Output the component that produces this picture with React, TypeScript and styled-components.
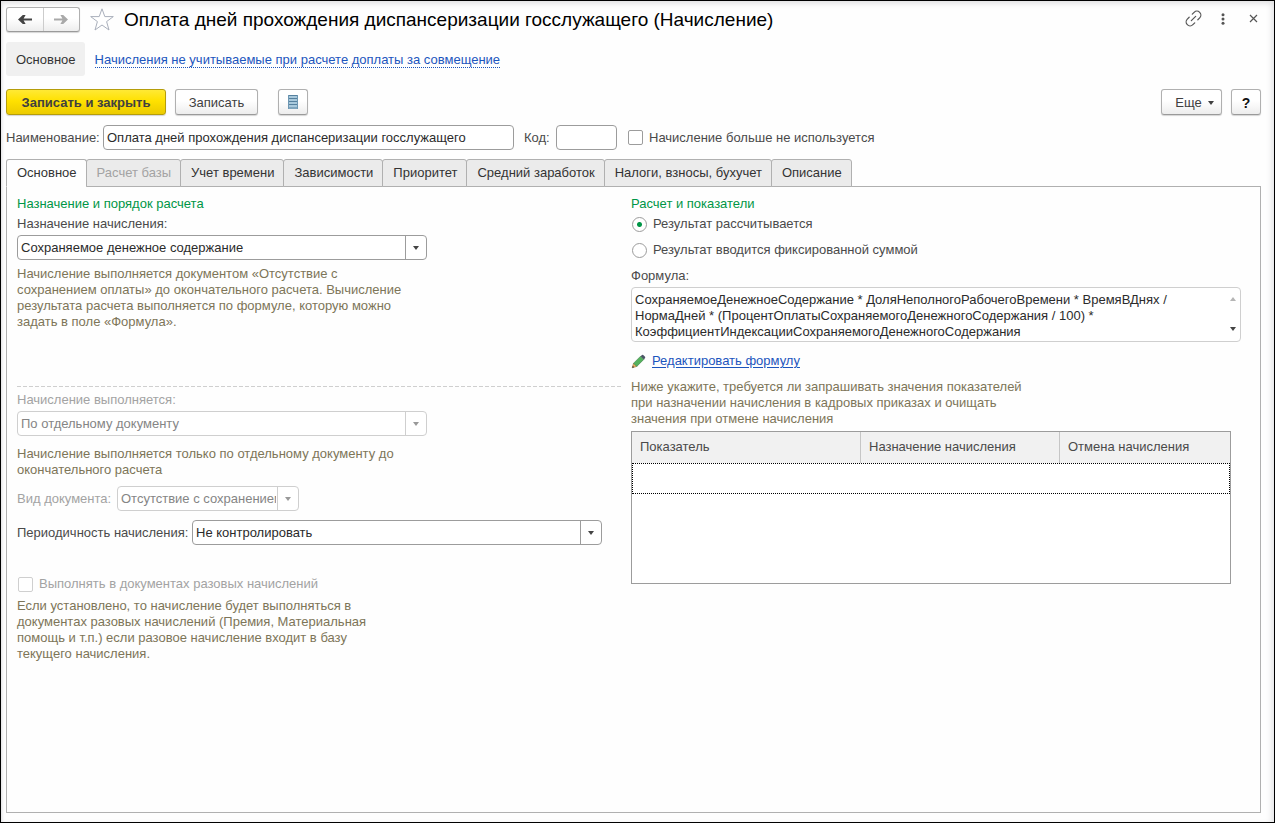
import React from "react";
import styled, { createGlobalStyle, css } from "styled-components";

const GlobalStyle = createGlobalStyle`
  *, *::before, *::after { box-sizing: border-box; }
  body { margin: 0; background: #fff; }
  body, button, input, select, textarea {
    font-family: "Liberation Sans", Arial, sans-serif;
    font-size: 13px;
    line-height: 16px;
  }
`;

const color = {
  text: "#2b2b2b",
  label: "#4a4a4a",
  hint: "#7d7558",
  disabled: "#a3a3a3",
  border: "#9c9c9c",
  lightBorder: "#cfcfcf",
  green: "#009646",
  link: "#1c55bd",
};

const Window = styled.div`
  display: flex;
  flex-direction: column;
  min-height: 100vh;
  padding: 6px 13px 9px 5px;
  border: 1px solid #000;
  background: #fefefe;
  box-shadow: inset 0 5px 6px -3px #dededf, inset -5px 0 6px -3px #e2e2e4, inset 3px 0 3px -2px #e2e2e4;
  color: ${color.label};
`;

const Header = styled.header`
  display: flex;
  align-items: center;
  height: 25px;
`;

const raised = css`
  border: 1px solid #b0b0b0;
  border-bottom-color: #9a9a9a;
  border-radius: 3px;
  background: linear-gradient(#fff 45%, #ededed);
  box-shadow: 0 1px 1px #d5d5d5;
`;

const History = styled.div`
  display: flex;
  width: 74px;
  height: 25px;
  ${raised}
`;

const HistoryButton = styled.button`
  display: flex;
  flex: 1;
  align-items: center;
  justify-content: center;
  padding: 0;
  border: 0;
  background: none;
  color: #444;
  & + & { border-left: 1px solid #ccc; }
  &:disabled { color: #a9a9a9; }
`;

const IconButton = styled.button`
  display: flex;
  align-items: center;
  justify-content: center;
  width: 30px;
  height: 24px;
  padding: 0;
  border: 0;
  background: none;
  color: #555;
`;

const StarButton = styled(IconButton)`
  margin: 0 7px;
`;

const Title = styled.h1`
  flex: 1;
  margin: 0;
  font-size: 19px;
  font-weight: 400;
  line-height: 24px;
  color: #000;
`;

const HeaderTools = styled.div`
  display: flex;
  margin-right: -7px;
  padding-bottom: 2px;
`;

const Nav = styled.nav`
  display: flex;
  align-items: center;
  gap: 10px;
  margin-top: 10px;
`;

const NavCurrent = styled.a`
  padding: 10px 9px 8px 10px;
  border-radius: 3px;
  background: #f0f0f0;
  color: #333;
  text-decoration: none;
`;

const NavLink = styled.a`
  padding-top: 2px;
  border-bottom: 1px dotted ${color.link};
  line-height: 14px;
  color: ${color.link};
  text-decoration: none;
`;

const CommandBar = styled.div`
  display: flex;
  gap: 9px;
  margin-top: 13px;
`;

const Button = styled.button<{ $width: number }>`
  display: flex;
  align-items: center;
  justify-content: center;
  width: ${(p) => p.$width}px;
  height: 26px;
  padding: 1px 0 0;
  ${raised}
  color: #404040;
  white-space: nowrap;
`;

const PrimaryButton = styled(Button)`
  border-color: #b59d0a;
  background: linear-gradient(#ffe935, #ffe100 45%, #eccb00);
  font-weight: 700;
`;

const ListButton = styled(Button)`
  margin-left: 11px;
  padding: 0;
`;

const MoreButton = styled(Button)`
  gap: 6px;
  margin-left: auto;
  padding-left: 6px;
`;

const HelpButton = styled(Button)`
  font-size: 14px;
  font-weight: 700;
  color: #111;
`;

const MainFields = styled.div`
  display: flex;
  align-items: center;
  margin-top: 10px;
`;

const FieldLabel = styled.label<{ $width?: number; $muted?: boolean }>`
  display: block;
  width: ${(p) => (p.$width ? `${p.$width}px` : "auto")};
  flex: none;
  white-space: nowrap;
  color: ${(p) => (p.$muted ? color.disabled : color.label)};
`;

const TextInput = styled.input<{ $width: number }>`
  width: ${(p) => p.$width}px;
  height: 25px;
  padding: 0 3px;
  border: 1px solid ${color.border};
  border-radius: 4px;
  background: #fff;
  color: ${color.text};
`;

const CodeLabel = styled(FieldLabel)`
  margin-left: 10px;
`;

const CheckLabel = styled.label<{ $muted?: boolean }>`
  display: flex;
  align-items: center;
  gap: 6px;
  color: ${(p) => (p.$muted ? color.disabled : color.label)};
`;

const Checkbox = styled.input`
  appearance: none;
  width: 15px;
  height: 15px;
  margin: 0;
  border: 1px solid ${color.border};
  border-radius: 2px;
  background: #fff;
  &:disabled { border-color: ${color.lightBorder}; }
`;

const NotUsed = styled(CheckLabel)`
  margin-left: 11px;
`;

const Tabs = styled.div`
  display: flex;
  margin: 9px 0 -1px;
`;

const Tab = styled.button<{ $active?: boolean }>`
  position: relative;
  height: 28px;
  padding: 0 9px 0 10px;
  border: 1px solid #b0b0b0;
  border-radius: 3px 3px 0 0;
  background: #ebebeb;
  color: #333;
  white-space: nowrap;
  & + & { margin-left: -1px; }
  &:disabled { color: ${color.disabled}; }
  ${(p) => p.$active && css`
    border-bottom-color: #fefefe;
    background: #fefefe;
  `}
`;

const Panel = styled.section`
  display: grid;
  grid-template-columns: minmax(0, 604fr) minmax(0, 610fr);
  gap: 10px;
  flex: 1;
  padding: 9px 19px 8px 10px;
  border: 1px solid #b0b0b0;
`;

const Column = styled.div`
  display: flex;
  flex-direction: column;
`;

const GroupTitle = styled.h2`
  margin: 0 0 4px;
  font-size: 13px;
  font-weight: 400;
  line-height: 16px;
  color: ${color.green};
`;

const Hint = styled.p<{ $width: number; $top: number }>`
  max-width: ${(p) => p.$width}px;
  margin: ${(p) => p.$top}px 0 0;
  color: ${color.hint};
`;

const PurposeHint = styled(Hint)`
  min-height: 120px;
`;

const Divider = styled.hr`
  width: 100%;
  height: 1px;
  margin: 0 0 5px;
  border: 0;
  background: repeating-linear-gradient(90deg, #cfcfcf 0 4px, transparent 4px 6px);
`;

const SelectBox = styled.span<{ $width: number }>`
  position: relative;
  display: block;
  width: ${(p) => p.$width}px;
  height: 25px;
`;

const Select = styled.select`
  appearance: none;
  width: 100%;
  height: 100%;
  padding: 0 22px 0 3px;
  border: 1px solid ${color.border};
  border-radius: 4px;
  background: #fff;
  color: ${color.text};
  &:disabled {
    border-color: ${color.lightBorder};
    color: #858585;
    opacity: 1;
  }
`;

const SelectArrow = styled.span<{ $muted?: boolean }>`
  position: absolute;
  top: 1px;
  right: 1px;
  bottom: 1px;
  display: flex;
  align-items: center;
  justify-content: center;
  width: 21px;
  border-left: 1px solid ${(p) => (p.$muted ? color.lightBorder : color.border)};
  color: ${(p) => (p.$muted ? "#999" : "#444")};
  pointer-events: none;
`;

const FieldStack = styled.div`
  display: grid;
  gap: 3px;
`;

const FieldRow = styled.div<{ $top: number }>`
  display: flex;
  align-items: center;
  margin-top: ${(p) => p.$top}px;
`;

const OneOff = styled(CheckLabel)`
  height: 16px;
  margin: 31px 0 0 1px;
`;

const Radios = styled.div`
  display: grid;
  gap: 10px;
  margin-bottom: 10px;
`;

const RadioLabel = styled.label`
  display: flex;
  align-items: center;
  gap: 6px;
  height: 16px;
`;

const Radio = styled.input`
  appearance: none;
  width: 15px;
  height: 15px;
  margin: 0 0 0 1px;
  border: 1px solid ${color.border};
  border-radius: 50%;
  background: #fff;
  &:checked { background: radial-gradient(circle, ${color.green} 2px, #fff 3px); }
`;

const FormulaBox = styled.div`
  position: relative;
  height: 55px;
`;

const Formula = styled.textarea`
  display: block;
  width: 100%;
  height: 100%;
  padding: 4px 20px 1px 3px;
  border: 1px solid ${color.lightBorder};
  border-radius: 4px;
  background: #fff;
  color: ${color.text};
  resize: none;
  overflow: hidden;
`;

const ScrollMarks = styled.span`
  position: absolute;
  top: 10px;
  right: 5px;
  bottom: 11px;
  display: flex;
  flex-direction: column;
  justify-content: space-between;
`;

const EditLink = styled.a`
  display: flex;
  align-items: center;
  gap: 6px;
  align-self: flex-start;
  margin-top: 11px;
  color: ${color.link};
  text-decoration-line: none;
  span { text-decoration: underline; text-underline-offset: 2px; }
`;

const TableBox = styled.div`
  max-width: 600px;
  height: 153px;
  margin-top: 4px;
  border: 1px solid ${color.border};
  background: #fff;
`;

const Table = styled.table`
  width: 100%;
  border-collapse: separate;
  border-spacing: 0;
  table-layout: fixed;
  th {
    height: 31px;
    padding: 0 8px 1px;
    border-right: 1px solid #c6c6c6;
    background: #f1f1f1;
    font-weight: 400;
    text-align: left;
    white-space: nowrap;
  }
  th:last-child { border-right: 0; }
  tbody tr { outline: 1px dotted #000; outline-offset: -1px; }
  td { height: 31px; padding: 0; }
`;

const ARROW_BACK = "M14 4.4H5.6L7.6 1H4.8L0 5.5 4.8 10H7.6L5.6 6.6H14Z";
const ARROW_FORWARD = "M0 4.4H8.4L6.4 1H9.2L14 5.5 9.2 10H6.4L8.4 6.6H0Z";

const Arrow = ({ forward }: { forward?: boolean }) => (
  <svg width="14" height="11" viewBox="0 0 14 11" aria-hidden="true">
    <path d={forward ? ARROW_FORWARD : ARROW_BACK} fill="currentColor" />
  </svg>
);

const Caret = ({ up, fill = "currentColor" }: { up?: boolean; fill?: string }) => (
  <svg width="6" height="4" viewBox="0 0 6 4" aria-hidden="true">
    <path d={up ? "M0 4H6L3 0Z" : "M0 0H6L3 4Z"} fill={fill} />
  </svg>
);

const Star = () => (
  <svg width="24" height="24" viewBox="0 0 24 24" aria-hidden="true">
    <path d="M12 .8 14.800 8.600H23.300L16.600 13.600 19 22 12 17 5 22 7.400 13.600.7 8.600H9.200Z" fill="#fff" stroke="#a9afbb" strokeLinejoin="round" />
  </svg>
);

const Chain = () => (
  <svg width="21" height="21" viewBox="0 0 24 24" fill="none" stroke="currentColor" strokeWidth="1.4" strokeLinecap="round" aria-hidden="true">
    <g transform="rotate(-45 12 12)">
      <path d="M9.500 16.500H6.500a4.500 4.500 0 0 1 0-9H9.500" />
      <path d="M14.500 7.500h3a4.500 4.500 0 0 1 0 9h-3" />
      <path d="M8.500 12h7" />
    </g>
  </svg>
);

const Dots = () => (
  <svg width="4" height="12" viewBox="0 0 4 12" fill="currentColor" aria-hidden="true">
    <circle cx="2" cy="1.7" r="1.5" />
    <circle cx="2" cy="6" r="1.5" />
    <circle cx="2" cy="10.3" r="1.5" />
  </svg>
);

const Cross = () => (
  <svg width="9" height="9" viewBox="0 0 9 9" stroke="currentColor" strokeWidth="1.2" aria-hidden="true">
    <path d="M1 1 8 8M8 1 1 8" />
  </svg>
);

const ListIcon = () => (
  <svg width="12" height="16" viewBox="0 0 12 16" aria-hidden="true">
    <rect x="1" y="1" width="10" height="14" fill="#a9c9dc" />
    <path d="M1 1.500H11M1 4.500H11M1 7.500H11M1 10.500H11M1 14H11" stroke="#56819f" />
    <path d="M1.500 1V15M10.500 1V15" stroke="#6d97b3" />
  </svg>
);

const Pencil = () => (
  <svg width="15" height="15" viewBox="0 0 15 15" aria-hidden="true">
    <path d="M1.200 13.800 2.600 9.200 5.800 12.400Z" fill="#f0b45e" stroke="#8b6a3c" strokeWidth=".6" />
    <path d="M1.200 13.800 1.800 11.800 3.200 13.200Z" fill="#333" />
    <path d="M2.600 9.200 9.600 2.200 12.800 5.400 5.800 12.400Z" fill="#55b35e" stroke="#3c7a46" strokeWidth=".6" />
    <path d="M9.600 2.200 11 .9Q11.600.5 12.200 1L14 2.800Q14.500 3.400 14.100 4L12.800 5.400Z" fill="#4b5566" />
  </svg>
);

type DropDownProps = { id: string; width: number; value: string; disabled?: boolean };

const DropDown = ({ id, width, value, disabled }: DropDownProps) => (
  <SelectBox $width={width}>
    <Select id={id} defaultValue={value} disabled={disabled}>
      <option>{value}</option>
    </Select>
    <SelectArrow $muted={disabled}><Caret /></SelectArrow>
  </SelectBox>
);

const tabs = [
  "Основное", "Расчет базы", "Учет времени", "Зависимости", "Приоритет",
  "Средний заработок", "Налоги, взносы, бухучет", "Описание",
];

const formula =
  "СохраняемоеДенежноеСодержание * ДоляНеполногоРабочегоВремени * ВремяВДнях /\n" +
  "НормаДней * (ПроцентОплатыСохраняемогоДенежногоСодержания / 100) *\n" +
  "КоэффициентИндексацииСохраняемогоДенежногоСодержания";

export default function App() {
  return (
    <Window>
      <GlobalStyle />
      <Header>
        <History>
          <HistoryButton aria-label="Назад"><Arrow /></HistoryButton>
          <HistoryButton aria-label="Вперед" disabled><Arrow forward /></HistoryButton>
        </History>
        <StarButton aria-label="В избранное"><Star /></StarButton>
        <Title>Оплата дней прохождения диспансеризации госслужащего (Начисление)</Title>
        <HeaderTools>
          <IconButton aria-label="Ссылка"><Chain /></IconButton>
          <IconButton aria-label="Меню"><Dots /></IconButton>
          <IconButton aria-label="Закрыть"><Cross /></IconButton>
        </HeaderTools>
      </Header>

      <Nav>
        <NavCurrent href="#main">Основное</NavCurrent>
        <NavLink href="#excluded">Начисления не учитываемые при расчете доплаты за совмещение</NavLink>
      </Nav>

      <CommandBar>
        <PrimaryButton $width={160}>Записать и закрыть</PrimaryButton>
        <Button $width={83}>Записать</Button>
        <ListButton $width={30} aria-label="Список"><ListIcon /></ListButton>
        <MoreButton $width={61}>Еще <Caret /></MoreButton>
        <HelpButton $width={30}>?</HelpButton>
      </CommandBar>

      <MainFields>
        <FieldLabel htmlFor="name" $width={97}>Наименование:</FieldLabel>
        <TextInput id="name" $width={411} defaultValue="Оплата дней прохождения диспансеризации госслужащего" />
        <CodeLabel htmlFor="code" $width={32}>Код:</CodeLabel>
        <TextInput id="code" $width={61} />
        <NotUsed><Checkbox type="checkbox" />Начисление больше не используется</NotUsed>
      </MainFields>

      <Tabs role="tablist">
        {tabs.map((name, i) => (
          <Tab key={name} role="tab" aria-selected={i === 0} $active={i === 0} disabled={i === 1}>{name}</Tab>
        ))}
      </Tabs>

      <Panel>
        <Column>
          <GroupTitle>Назначение и порядок расчета</GroupTitle>
          <FieldStack>
            <FieldLabel htmlFor="purpose">Назначение начисления:</FieldLabel>
            <DropDown id="purpose" width={410} value="Сохраняемое денежное содержание" />
          </FieldStack>
          <PurposeHint $width={390} $top={6}>
            Начисление выполняется документом «Отсутствие с сохранением оплаты» до окончательного расчета.
            Вычисление результата расчета выполняется по формуле, которую можно задать в поле «Формула».
          </PurposeHint>
          <Divider />
          <FieldStack>
            <FieldLabel htmlFor="mode" $muted>Начисление выполняется:</FieldLabel>
            <DropDown id="mode" width={410} value="По отдельному документу" disabled />
          </FieldStack>
          <Hint $width={390} $top={10}>
            Начисление выполняется только по отдельному документу до окончательного расчета
          </Hint>
          <FieldRow $top={8}>
            <FieldLabel htmlFor="kind" $width={100} $muted>Вид документа:</FieldLabel>
            <DropDown id="kind" width={182} value="Отсутствие с сохранением оплаты" disabled />
          </FieldRow>
          <FieldRow $top={9}>
            <FieldLabel htmlFor="period" $width={175}>Периодичность начисления:</FieldLabel>
            <DropDown id="period" width={410} value="Не контролировать" />
          </FieldRow>
          <OneOff $muted><Checkbox type="checkbox" disabled />Выполнять в документах разовых начислений</OneOff>
          <Hint $width={360} $top={6}>
            Если установлено, то начисление будет выполняться в документах разовых начислений (Премия,
            Материальная помощь и т.п.) если разовое начисление входит в базу текущего начисления.
          </Hint>
        </Column>

        <Column>
          <GroupTitle>Расчет и показатели</GroupTitle>
          <Radios>
            <RadioLabel><Radio type="radio" name="result" defaultChecked />Результат рассчитывается</RadioLabel>
            <RadioLabel><Radio type="radio" name="result" />Результат вводится фиксированной суммой</RadioLabel>
          </Radios>
          <FieldStack>
            <FieldLabel htmlFor="formula">Формула:</FieldLabel>
            <FormulaBox>
              <Formula id="formula" readOnly value={formula} />
              <ScrollMarks><Caret up fill="#b5b5b5" /><Caret fill="#444" /></ScrollMarks>
            </FormulaBox>
          </FieldStack>
          <EditLink href="#formula"><Pencil /><span>Редактировать формулу</span></EditLink>
          <Hint $width={400} $top={10}>
            Ниже укажите, требуется ли запрашивать значения показателей при назначении начисления в кадровых
            приказах и очищать значения при отмене начисления
          </Hint>
          <TableBox>
            <Table>
              <colgroup><col width="229" /><col width="199" /><col width="170" /></colgroup>
              <thead>
                <tr><th>Показатель</th><th>Назначение начисления</th><th>Отмена начисления</th></tr>
              </thead>
              <tbody>
                <tr><td /><td /><td /></tr>
              </tbody>
            </Table>
          </TableBox>
        </Column>
      </Panel>
    </Window>
  );
}
